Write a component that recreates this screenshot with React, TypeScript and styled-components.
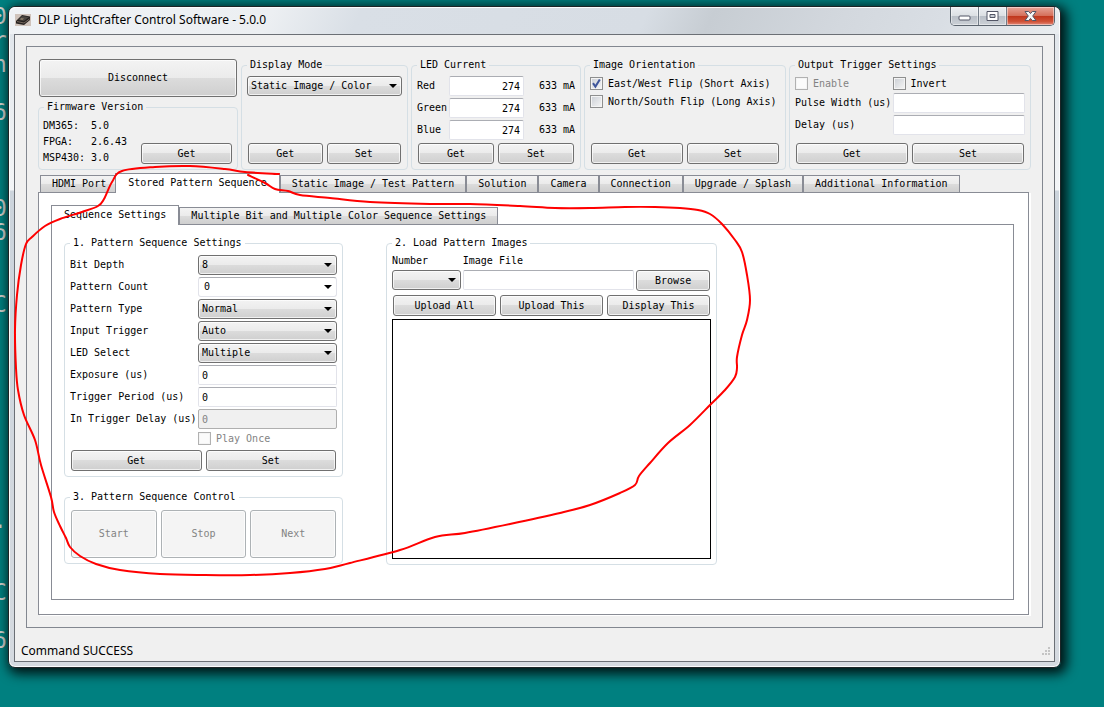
import React from "react";
import styled, { createGlobalStyle, css } from "styled-components";

const mono = `"DejaVu Sans Mono", "Liberation Mono", monospace`;
const ui = `"Noto Sans", "Open Sans", sans-serif`;
const face = "linear-gradient(#f3f3f3 0%, #ebebeb 49%, #dcdcdc 50%, #cfcfcf 100%)";

const GlobalStyle = createGlobalStyle`
  *, *::before, *::after { box-sizing: border-box; }
  body { margin: 0; background: #008080; }
  button, input, select { font: inherit; color: inherit; margin: 0; }
`;

const Desktop = styled.div`
  position: relative;
  display: flex;
  min-height: 100vh;
  padding: 6px 43px 39px 8px;
  overflow: hidden;
  background: #008080;
`;

const Console = styled.pre`
  position: absolute;
  top: -20px;
  left: -7px;
  margin: 0;
  font: 23px/24px ${mono};
  color: #d6d3ce;
`;

const Window = styled.main`
  position: relative;
  display: flex;
  flex: 1;
  flex-direction: column;
  min-width: 0;
  padding: 0 5px 5px;
  border: 1px solid #1d2426;
  border-radius: 7px;
  background: linear-gradient(#dde3e9 0, #e6eaee 60px, #f3f5f7 183px, #ccd4dc 184px, #d5dae0 100%);
  box-shadow: inset 0 0 0 1px #fbfcfd, 3px 3px 12px 3px rgba(0, 0, 0, 0.85);
`;

const TitleBar = styled.header`
  display: flex;
  align-items: flex-start;
  height: 27px;
  margin: 0 -4px;
  padding-left: 5px;
  border-radius: 6px 6px 0 0;
  background: linear-gradient(115deg, #eff2f5 0, #eceff2 240px, #d9dfe6 320px, #d7dde4 580px, #c7cdd3 640px, #d3d8de 760px, #d9dee4 850px, #e9edf0 100%);
  box-shadow: inset 0 1px #fbfcfd;
`;

const Title = styled.h1`
  flex: 1;
  margin: 0 0 0 6px;
  font: 12px/26px ${ui};
  color: #000;
`;

const AppIcon = styled.svg`
  margin-top: 6px;
`;

const Caption = styled.div`
  display: flex;
  margin-right: 4px;
  overflow: hidden;
  border: 1px solid #5b646e;
  border-top: 0;
  border-radius: 0 0 5px 5px;
`;

const CaptionButton = styled.button<{ $close?: boolean }>`
  display: flex;
  align-items: center;
  justify-content: center;
  width: ${(p) => (p.$close ? 47 : 28)}px;
  height: 18px;
  padding: 0;
  border: 0;
  border-right: ${(p) => (p.$close ? "0" : "1px solid #727c87")};
  background: ${(p) =>
    p.$close
      ? "linear-gradient(#e5a598 0, #d5705b 48%, #bf351b 50%, #cf5136 80%, #e3897a 100%)"
      : "linear-gradient(#eceff2 0, #dce0e4 48%, #b9bfc7 50%, #cbd0d6 100%)"};
  box-shadow: inset 0 0 0 1px rgba(255, 255, 255, 0.45);
`;

const Client = styled.div`
  display: flex;
  flex: 1;
  flex-direction: column;
  padding: 11px 11px 0;
  border: 1px solid #6b6f75;
  background: #f0f0f0;
  font: 10px/12px ${mono};
  color: #000;
`;

const Frame = styled.div`
  display: flex;
  flex: 1;
  flex-direction: column;
  gap: 3px;
  padding: 12px 11px;
  border: 1px solid #828790;
`;

const TopRow = styled.div`
  display: grid;
  grid-template-columns:
    minmax(0, 200fr) minmax(0, 167fr) minmax(0, 170fr) minmax(0, 202fr) minmax(0, 242fr);
  gap: 3px;
  height: 111px;
`;

const Stack = styled.div<{ $gap: number }>`
  display: flex;
  flex-direction: column;
  gap: ${(p) => p.$gap}px;
`;

const Group = styled.fieldset<{ $top?: number; $grow?: boolean }>`
  display: flex;
  flex: ${(p) => (p.$grow ? 1 : "none")};
  flex-direction: column;
  min-width: 0;
  margin: 0;
  padding: ${(p) => p.$top ?? 5}px 5px 5px;
  border: 1px solid #d5dfe5;
  border-radius: 4px;

  legend {
    height: 12px;
    padding: 0 3px;
  }
`;

const pushButton = css`
  border: 1px solid #707070;
  border-radius: 3px;
  background: ${face};
  box-shadow: inset 0 0 0 1px rgba(255, 255, 255, 0.7);
`;

const Button = styled.button<{ $height?: number }>`
  ${pushButton}
  flex: 1;
  min-width: 0;
  height: ${(p) => p.$height ?? 21}px;
  padding: 0;
  white-space: nowrap;

  &:disabled {
    border-color: #adb2b5;
    background: #f4f4f4;
    color: #838383;
  }
`;

const ButtonRow = styled.div<{ $bottom?: boolean }>`
  display: flex;
  flex: none;
  gap: 4px;
  margin: ${(p) => (p.$bottom ? "auto" : "0")} 1px 0;
`;

const Firmware = styled.div`
  display: flex;
  align-items: flex-end;
  justify-content: space-between;
`;

const Versions = styled.dl`
  display: grid;
  grid-template-columns: 48px auto;
  margin: 0 0 -2px -1px;
  line-height: 16px;

  dd {
    margin: 0;
  }
`;

const FirmwareAction = styled.div`
  display: flex;
  width: 91px;
`;

const TextBox = styled.input<{ $right?: boolean }>`
  width: 100%;
  min-width: 0;
  height: 20px;
  padding: 0 3px;
  border: 1px solid #e2e3ea;
  border-top-color: #abadb3;
  border-radius: 2px;
  background: #fff;
  text-align: ${(p) => (p.$right ? "right" : "left")};

  &:disabled {
    border-color: #afafaf;
    background: #f0f0f0;
    color: #838383;
  }
`;

const SelectWrap = styled.span`
  position: relative;
  display: block;

  svg {
    position: absolute;
    top: 8px;
    right: 5px;
    pointer-events: none;
  }
`;

const Select = styled.select<{ $editable?: boolean }>`
  ${pushButton}
  display: block;
  width: 100%;
  height: 20px;
  padding: 0 16px 0 3px;
  appearance: none;
  ${(p) =>
    p.$editable &&
    css`
      padding-left: 5px;
      border-color: #abadb3 #e2e3ea #e2e3ea;
      background: #fff;
    `}
`;

const CurrentGrid = styled.div`
  display: grid;
  grid-template-columns: 32px minmax(0, 75fr) minmax(0, 51fr);
  row-gap: 2px;
  align-items: center;

  output {
    text-align: right;
    white-space: nowrap;
  }
`;

const CheckLabel = styled.label<{ $disabled?: boolean }>`
  display: flex;
  align-items: center;
  gap: 5px;
  height: 15px;
  color: ${(p) => (p.$disabled ? "#838383" : "#000")};
  white-space: nowrap;
`;

const CheckBox = styled.span`
  position: relative;
  display: block;
  width: 13px;
  height: 13px;

  input {
    display: block;
    width: 13px;
    height: 13px;
    border: 1px solid #8e8f8f;
    background: linear-gradient(135deg, #cbcfd5, #f6f6f6);
    background-clip: content-box;
    padding: 1px;
    background-color: #f4f4f4;
    box-shadow: inset 0 0 0 1px #f4f4f4;
    appearance: none;
  }

  input:disabled {
    border-color: #b1b1b1;
    background: #fbfbfb;
  }

  svg {
    position: absolute;
    inset: 0;
    pointer-events: none;
  }
`;

const TriggerGrid = styled.div`
  display: grid;
  grid-template-columns: minmax(0, 98fr) minmax(0, 133fr);
  row-gap: 2px;
  align-items: center;
  white-space: nowrap;
`;

const TabArea = styled.div`
  display: flex;
  flex: 1;
  flex-direction: column;
  margin-right: 2px;
`;

const TabList = styled.div`
  display: flex;
  align-items: flex-end;
  height: 20px;
  padding-left: 2px;
`;

const InnerTabList = styled(TabList)`
  padding-left: 0;
`;

const Tab = styled.button<{ $selected?: boolean; $overlap?: boolean }>`
  height: 17px;
  margin-bottom: 1px;
  padding: 0 11px;
  border: 1px solid #898c95;
  border-bottom: 0;
  background: ${face};
  white-space: nowrap;
  ${(p) =>
    p.$selected &&
    css`
      position: relative;
      height: 20px;
      margin-bottom: 0;
      padding: 0 12px 2px;
      background: #fff;
    `}
  ${(p) =>
    p.$overlap &&
    css`
      margin-left: -3px;
    `}
`;

const Page = styled.section`
  display: flex;
  flex: 1;
  flex-direction: column;
  margin-top: -1px;
  padding: 12px 14px 14px 12px;
  border: 1px solid #898c95;
  background: #fff;
  box-shadow: 2px 1px #fff;
`;

const SequencePage = styled.section`
  display: grid;
  flex: 1;
  grid-template-columns: minmax(0, 279fr) minmax(0, 331fr) minmax(0, 253fr);
  column-gap: 43px;
  align-items: start;
  margin-top: -1px;
  padding: 12px 0 24px 12px;
  border: 1px solid #898c95;
`;

const SettingsGrid = styled.div`
  display: grid;
  grid-template-columns: 128px minmax(0, 1fr);
  row-gap: 2px;
  align-items: center;
  margin-bottom: 4px;
  white-space: nowrap;

  > :last-child {
    grid-column: 2;
  }
`;

const FileGrid = styled.div`
  display: grid;
  grid-template-columns: minmax(0, 69fr) minmax(0, 172fr) minmax(0, 74fr);
  column-gap: 2px;
  margin-bottom: 4px;
  row-gap: 3px;
  margin-right: 1px;

  > label {
    height: 12px;
  }

  > button {
    grid-column: 3;
  }
`;

const Preview = styled.div`
  height: 240px;
  margin-top: 3px;
  border: 1px solid #000;
  background: #fff;
`;

const StatusBar = styled.footer`
  display: flex;
  align-items: center;
  justify-content: space-between;
  height: 33px;
  margin: 0 -7px 0 -5px;
  padding-top: 12px;
  font: 12px/20px ${ui};
`;

const Marker = styled.svg`
  position: absolute;
  top: 0;
  left: 0;
  pointer-events: none;
`;

const Arrow = () => (
  <svg width="8" height="4" viewBox="0 0 8 4" aria-hidden="true">
    <path d="M0 0h8L4 4z" fill="#000" />
  </svg>
);

function Combo({ id, value, editable, label }: { id?: string; value: string; editable?: boolean; label?: string }) {
  return (
    <SelectWrap>
      <Select id={id} aria-label={label} defaultValue={value} $editable={editable}>
        <option value={value}>{value}</option>
      </Select>
      <Arrow />
    </SelectWrap>
  );
}

function Check({ text, checked, disabled }: { text: string; checked?: boolean; disabled?: boolean }) {
  return (
    <CheckLabel $disabled={disabled}>
      <CheckBox>
        <input type="checkbox" defaultChecked={checked} disabled={disabled} />
        {checked && (
          <svg width="13" height="13" viewBox="0 0 13 13" aria-hidden="true">
            <path d="M3 6.2L5.4 9.6L9.8 2.4" fill="none" stroke="#3f569b" strokeWidth="2" />
          </svg>
        )}
      </CheckBox>
      {text}
    </CheckLabel>
  );
}

const GetSet = () => (
  <ButtonRow $bottom>
    <Button>Get</Button>
    <Button>Set</Button>
  </ButtonRow>
);

const consoleRows: Record<number, string> = {
  0: "5.255  Mask:255.255.255.0",
  1: "0",
  2: "r",
  3: "n",
  5: "6",
  9: "0",
  10: "6",
  13: "C",
  22: ".",
  25: "C",
  27: "6",
};
const consoleText = Array.from({ length: 29 }, (_, i) => consoleRows[i] ?? "").join("\n");

const loop: number[][] = [
  [279, 174], [245, 172], [225, 169], [190, 166], [155, 167], [122, 171], [112, 182], [104, 199],
  [98, 206], [82, 212], [60, 219], [45, 226], [32, 237], [26, 244], [21, 265], [17, 295], [15, 330],
  [16, 368], [18, 390], [24, 415], [35, 440], [41, 465], [51, 497], [54, 512], [60, 526], [66, 538],
  [70, 547], [80, 556], [96, 564], [120, 570], [160, 574], [205, 575], [250, 575], [290, 573],
  [325, 569], [350, 563], [400, 550], [435, 537], [465, 533], [510, 524], [560, 513], [590, 505],
  [620, 493], [635, 485], [639, 476], [650, 463], [668, 443], [690, 425], [711, 404], [725, 390],
  [735, 377], [737, 368], [737, 357], [742, 335], [747, 320], [750, 300], [747, 275], [742, 252],
  [735, 240], [722, 224], [710, 214], [698, 210], [680, 208], [655, 207], [625, 207], [590, 208],
  [555, 208], [520, 206], [470, 204], [430, 204], [370, 202], [330, 198], [300, 195], [288, 191],
  [275, 189], [265, 183], [248, 175],
];

// Smooth curve through every point (Catmull-Rom converted to cubic segments).
function smooth(pts: number[][]) {
  let d = `M${pts[0][0]} ${pts[0][1]}`;
  for (let i = 0; i < pts.length - 1; i++) {
    const a = pts[i - 1] ?? pts[i];
    const b = pts[i];
    const c = pts[i + 1];
    const e = pts[i + 2] ?? c;
    d += `C${b[0] + (c[0] - a[0]) / 6} ${b[1] + (c[1] - a[1]) / 6} ${c[0] - (e[0] - b[0]) / 6} ${c[1] - (e[1] - b[1]) / 6} ${c[0]} ${c[1]}`;
  }
  return d;
}

const tabs = [
  "HDMI Port", "Stored Pattern Sequence", "Static Image / Test Pattern", "Solution",
  "Camera", "Connection", "Upgrade / Splash", "Additional Information",
];

const settings = [
  { id: "depth", label: "Bit Depth", value: "8", kind: "combo" },
  { id: "count", label: "Pattern Count", value: "0", kind: "editable" },
  { id: "type", label: "Pattern Type", value: "Normal", kind: "combo" },
  { id: "trigger", label: "Input Trigger", value: "Auto", kind: "combo" },
  { id: "led", label: "LED Select", value: "Multiple", kind: "combo" },
  { id: "exposure", label: "Exposure (us)", value: "0", kind: "text" },
  { id: "period", label: "Trigger Period (us)", value: "0", kind: "text" },
  { id: "delay", label: "In Trigger Delay (us)", value: "0", kind: "disabled" },
];

export default function App() {
  return (
    <Desktop>
      <GlobalStyle />
      <Console aria-hidden="true">{consoleText}</Console>
      <Window>
        <TitleBar>
          <AppIcon width="17" height="14" viewBox="0 0 17 14" aria-hidden="true">
            <rect x="0" y="1" width="16" height="12" fill="#cfc3bb" />
            <path d="M1 8L7 2L15 3.5L15 7L9 12L1 10.5z" fill="#25211f" />
            <path d="M7 3L14 4L9 8L3 7z" fill="#4b4641" />
            <path d="M6 5l3 .5L7.500 7 5 6.500z" fill="#8a7d6a" />
            <path d="M2 8.500L9 10L14.500 6" fill="none" stroke="#76695f" strokeWidth="1" />
          </AppIcon>
          <Title>DLP LightCrafter Control Software - 5.0.0</Title>
          <Caption>
            <CaptionButton aria-label="Minimize">
              <svg width="13" height="12" viewBox="0 0 13 12" aria-hidden="true">
                <rect x="1" y="6" width="11" height="4" rx="1" fill="#fff" stroke="#535666" />
              </svg>
            </CaptionButton>
            <CaptionButton aria-label="Maximize">
              <svg width="13" height="12" viewBox="0 0 13 12" aria-hidden="true">
                <path d="M1 1.500h11v9H1z" fill="#fff" stroke="#535666" />
                <path d="M4 4.500h5v3H4z" fill="#c9ced5" stroke="#535666" />
              </svg>
            </CaptionButton>
            <CaptionButton aria-label="Close" $close>
              <svg width="13" height="12" viewBox="0 0 13 12" aria-hidden="true">
                <path
                  d="M1 1.500H4.700L6.500 3.600L8.300 1.500H12L8.700 6L12 10.500H8.300L6.500 8.400L4.700 10.500H1L4.300 6z"
                  fill="#f6f6f6"
                  stroke="#535666"
                />
              </svg>
            </CaptionButton>
          </Caption>
        </TitleBar>

        <Client>
          <Frame>
            <TopRow>
              <Stack $gap={4}>
                <ButtonRow>
                  <Button $height={38}>Disconnect</Button>
                </ButtonRow>
                <Group $grow>
                  <legend>Firmware Version</legend>
                  <Firmware>
                    <Versions>
                      <dt>DM365:</dt>
                      <dd>5.0</dd>
                      <dt>FPGA:</dt>
                      <dd>2.6.43</dd>
                      <dt>MSP430:</dt>
                      <dd>3.0</dd>
                    </Versions>
                    <FirmwareAction>
                      <Button>Get</Button>
                    </FirmwareAction>
                  </Firmware>
                </Group>
              </Stack>

              <Group>
                <legend>Display Mode</legend>
                <Combo value="Static Image / Color" label="Display Mode" />
                <GetSet />
              </Group>

              <Group>
                <legend>LED Current</legend>
                <CurrentGrid>
                  {["Red", "Green", "Blue"].map((name) => (
                    <React.Fragment key={name}>
                      <label htmlFor={name}>{name}</label>
                      <TextBox id={name} defaultValue="274" $right />
                      <output htmlFor={name}>633 mA</output>
                    </React.Fragment>
                  ))}
                </CurrentGrid>
                <GetSet />
              </Group>

              <Group>
                <legend>Image Orientation</legend>
                <Stack $gap={3}>
                  <Check text="East/West Flip (Short Axis)" checked />
                  <Check text="North/South Flip (Long Axis)" />
                </Stack>
                <GetSet />
              </Group>

              <Group>
                <legend>Output Trigger Settings</legend>
                <TriggerGrid>
                  <Check text="Enable" disabled />
                  <Check text="Invert" />
                  <label htmlFor="pulse">Pulse Width (us)</label>
                  <TextBox id="pulse" />
                  <label htmlFor="outDelay">Delay (us)</label>
                  <TextBox id="outDelay" />
                </TriggerGrid>
                <GetSet />
              </Group>
            </TopRow>

            <TabArea>
              <TabList role="tablist">
                {tabs.map((t, i) => (
                  <Tab key={t} role="tab" aria-selected={i === 1} $selected={i === 1} $overlap={i === 1}>
                    {t}
                  </Tab>
                ))}
              </TabList>
              <Page>
                <InnerTabList role="tablist">
                  <Tab role="tab" aria-selected $selected>
                    Sequence Settings
                  </Tab>
                  <Tab role="tab" aria-selected={false}>
                    Multiple Bit and Multiple Color Sequence Settings
                  </Tab>
                </InnerTabList>
                <SequencePage>
                  <Stack $gap={14}>
                    <Group $top={6}>
                      <legend>1. Pattern Sequence Settings</legend>
                      <SettingsGrid>
                        {settings.map((s) => (
                          <React.Fragment key={s.id}>
                            <label htmlFor={s.id}>{s.label}</label>
                            {s.kind === "combo" || s.kind === "editable" ? (
                              <Combo id={s.id} value={s.value} editable={s.kind === "editable"} />
                            ) : (
                              <TextBox id={s.id} defaultValue={s.value} disabled={s.kind === "disabled"} />
                            )}
                          </React.Fragment>
                        ))}
                        <Check text="Play Once" disabled />
                      </SettingsGrid>
                      <GetSet />
                    </Group>
                    <Group $top={7}>
                      <legend>3. Pattern Sequence Control</legend>
                      <ButtonRow>
                        {["Start", "Stop", "Next"].map((t) => (
                          <Button key={t} $height={48} disabled>
                            {t}
                          </Button>
                        ))}
                      </ButtonRow>
                    </Group>
                  </Stack>

                  <Group $top={6}>
                    <legend>2. Load Pattern Images</legend>
                    <FileGrid>
                      <label htmlFor="number">Number</label>
                      <label htmlFor="file">Image File</label>
                      <span />
                      <Combo id="number" value="" />
                      <TextBox id="file" />
                      <Button>Browse</Button>
                    </FileGrid>
                    <ButtonRow>
                      <Button>Upload All</Button>
                      <Button>Upload This</Button>
                      <Button>Display This</Button>
                    </ButtonRow>
                    <Preview />
                  </Group>
                </SequencePage>
              </Page>
            </TabArea>
          </Frame>
          <StatusBar>
            Command SUCCESS
            <svg width="8" height="8" viewBox="0 0 8 8" aria-hidden="true">
              <path d="M6 0h2v2H6zM3 3h2v2H3zM6 3h2v2H6zM0 6h2v2H0zM3 6h2v2H3zM6 6h2v2H6z" fill="#c4c4c4" />
            </svg>
          </StatusBar>
        </Client>
      </Window>
      <Marker width="760" height="600" viewBox="0 0 760 600" aria-hidden="true">
        <path d={smooth(loop)} fill="none" stroke="#f00" strokeWidth="2" strokeLinecap="round" />
      </Marker>
    </Desktop>
  );
}
